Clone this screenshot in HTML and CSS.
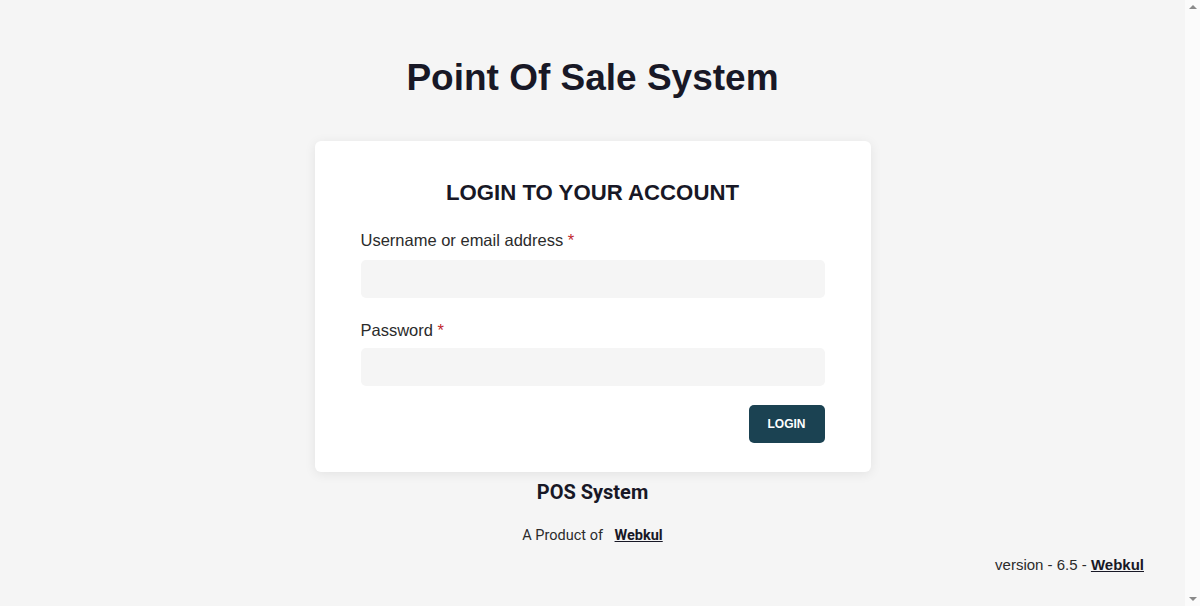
FILE: index.html
```html
<!DOCTYPE html>
<html lang="en">
<head>
<meta charset="utf-8">
<title>Point Of Sale System</title>
<link rel="stylesheet" href="styles.css">
</head>
<body>
<div class="viewport">
  <main class="page">
    <h1 class="title">Point Of Sale System</h1>
    <form class="card">
      <h2 class="card-title">LOGIN TO YOUR ACCOUNT</h2>
      <label class="field">
        <span class="label">Username or email address <span class="req">*</span></span>
        <input class="input" type="text">
      </label>
      <label class="field">
        <span class="label">Password <span class="req">*</span></span>
        <input class="input" type="password">
      </label>
      <div class="actions">
        <button class="btn" type="button">LOGIN</button>
      </div>
    </form>
    <div class="brand">
      <div class="brand-name">POS System</div>
      <div class="brand-by">A Product of <a class="brand-link" href="#">Webkul</a></div>
    </div>
    <div class="version">version - 6.5 - <a class="version-link" href="#">Webkul</a></div>
  </main>
  <div class="scrollbar" aria-hidden="true">
    <span class="arrow arrow-up"></span>
    <span class="arrow arrow-down"></span>
  </div>
</div>
</body>
</html>
```
FILE: styles.css
```css
html, body {
  margin: 0;
  padding: 0;
  height: 100%;
  overflow: hidden;
}
body {
  background: #f5f5f5;
  font-family: "Liberation Sans", Arial, sans-serif;
  color: #1b1b29;
}
.viewport {
  display: flex;
  height: 606px;
}
.page {
  flex: 1;
  display: flex;
  flex-direction: column;
  align-items: center;
  padding-top: 55px;
}
.scrollbar {
  width: 15px;
  flex: none;
  background: #fbfbfb;
  display: flex;
  flex-direction: column;
  justify-content: space-between;
  align-items: center;
  padding: 5px 0;
  box-sizing: border-box;
}
.arrow {
  width: 0;
  height: 0;
  border-left: 4px solid transparent;
  border-right: 4px solid transparent;
}
.arrow-up {
  border-bottom: 4px solid #8a8a8a;
}
.arrow-down {
  border-top: 4px solid #8a8a8a;
}
.title {
  margin: 0;
  font-size: 37px;
  font-weight: 700;
  line-height: 46px;
  color: #181826;
}
.card {
  margin-top: 40px;
  width: 556px;
  box-sizing: border-box;
  background: #fff;
  border-radius: 6px;
  box-shadow: 0 2px 12px rgba(0,0,0,0.08);
  padding: 39px 46px 29px;
  display: flex;
  flex-direction: column;
}
.card-title {
  margin: 0 0 24px;
  text-align: center;
  font-size: 22.2px;
  line-height: 25px;
  font-weight: 700;
  color: #181826;
}
.field {
  display: flex;
  flex-direction: column;
  margin-bottom: 19px;
}
.field + .field .label {
  margin-top: 2px;
  margin-bottom: 7px;
}
.label {
  font-size: 16.5px;
  line-height: 22px;
  color: #2b2b2b;
  margin-bottom: 9px;
}
.req {
  color: #c0272d;
}
.input {
  height: 38px;
  border: none;
  border-radius: 5px;
  background: #f5f5f5;
  padding: 0 12px;
  font: inherit;
  outline: none;
}
.actions {
  display: flex;
  justify-content: flex-end;
}
.btn {
  width: 76px;
  height: 38px;
  border: none;
  border-radius: 5px;
  background: #1b4252;
  color: #fff;
  font-family: "Liberation Sans", Arial, sans-serif;
  font-weight: 700;
  font-size: 12px;
  cursor: pointer;
}
.brand {
  margin-top: 8px;
  display: flex;
  flex-direction: column;
  align-items: center;
  font-family: Roboto, "Liberation Sans", sans-serif;
}
.brand-name {
  font-size: 20px;
  font-weight: 700;
  line-height: 24px;
  color: #181826;
}
.brand-by {
  margin-top: 23px;
  font-size: 14.5px;
  line-height: 18px;
  color: #2b2b2b;
}
.brand-link {
  margin-left: 8px;
  color: #181826;
  font-weight: 700;
  text-decoration: underline;
}
.version {
  align-self: flex-end;
  margin-right: 41px;
  margin-top: 11px;
  font-size: 15px;
  line-height: 18px;
  color: #2b2b2b;
}
.version-link {
  color: #181826;
  font-weight: 700;
  text-decoration: underline;
}
```
